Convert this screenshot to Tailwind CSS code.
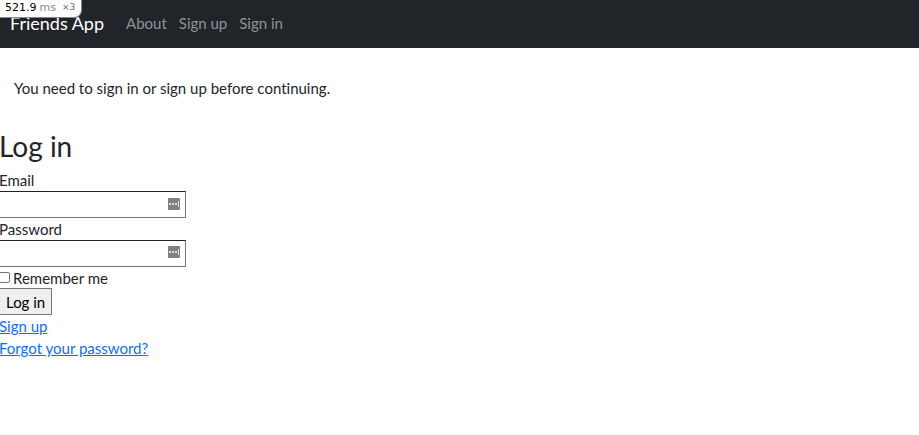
<!DOCTYPE html>
<html lang="en">
<head>
<meta charset="utf-8">
<meta name="viewport" content="width=device-width, initial-scale=1">
<title>Friends App</title>
<script src="https://cdn.jsdelivr.net/npm/@tailwindcss/browser@4"></script>
</head>
<body class="bg-white font-[Lato,'Noto_Sans',sans-serif] text-[15px] leading-[22px] text-[#212529] [font-variant-ligatures:none]">
  <aside class="absolute left-0 top-0 flex h-[18px] w-[82px] items-center rounded-br-lg border-b border-r border-[#888] bg-white pb-0.5 pl-[5px] font-['DejaVu_Sans',sans-serif] text-[11px] leading-none text-black">
    <span>521.9</span><span class="ml-[3px] text-[#888]">ms</span><span class="ml-1.5 text-[9px] text-[#666]">×3</span>
  </aside>
  <nav class="flex h-12 items-center bg-[#212529] px-2.5 pb-0.5 text-[#909294]">
    <a href="#" class="mr-[22px] text-lg leading-6 text-white">Friends App</a>
    <div class="flex gap-3">
      <a href="#">About</a>
      <a href="#">Sign up</a>
      <a href="#">Sign in</a>
    </div>
  </nav>
  <main class="-ml-px">
    <p class="px-[15px] pb-[30px] pt-[29px]">You need to sign in or sign up before continuing.</p>
    <h2 class="mb-1.5 text-[28px] leading-[34px]">Log in</h2>
    <form>
      <label for="email" class="block">Email</label>
      <div class="relative w-[187px]">
        <input id="email" type="email" class="block h-[27px] w-full border border-[#767676] border-l-white border-t-[#212121] bg-white pl-1 pr-6 outline-none">
        <svg class="absolute right-1.5 top-[7px] size-3" viewBox="0 0 12 12" aria-hidden="true"><rect width="12" height="12" rx="1" fill="#808080"/><path d="M1 5h2v2H1zM4 5h2v2H4zM7 5h2v2H7zM10 3h1v6h-1z" fill="#ddd"/></svg>
      </div>
      <label for="password" class="block">Password</label>
      <div class="relative w-[187px]">
        <input id="password" type="password" class="block h-[27px] w-full border border-[#767676] border-l-white border-t-[#212121] bg-white pl-1 pr-6 outline-none">
        <svg class="absolute right-1.5 top-1.5 size-3" viewBox="0 0 12 12" aria-hidden="true"><rect width="12" height="12" rx="1" fill="#808080"/><path d="M1 5h2v2H1zM4 5h2v2H4zM7 5h2v2H7zM10 3h1v6h-1z" fill="#ddd"/></svg>
      </div>
      <div class="flex h-[21px] items-center">
        <input id="remember" type="checkbox" class="mr-[3px] size-[11px] appearance-none rounded-xs border border-[#767676] bg-white">
        <label for="remember">Remember me</label>
      </div>
      <button type="submit" class="block h-[27px] border border-[#767676] bg-[#efefef] px-1.5 text-black">Log in</button>
    </form>
    <a href="#" class="block text-[#0d6efd] underline">Sign up</a>
    <a href="#" class="text-[#0d6efd] underline">Forgot your password?</a>
  </main>
</body>
</html>
